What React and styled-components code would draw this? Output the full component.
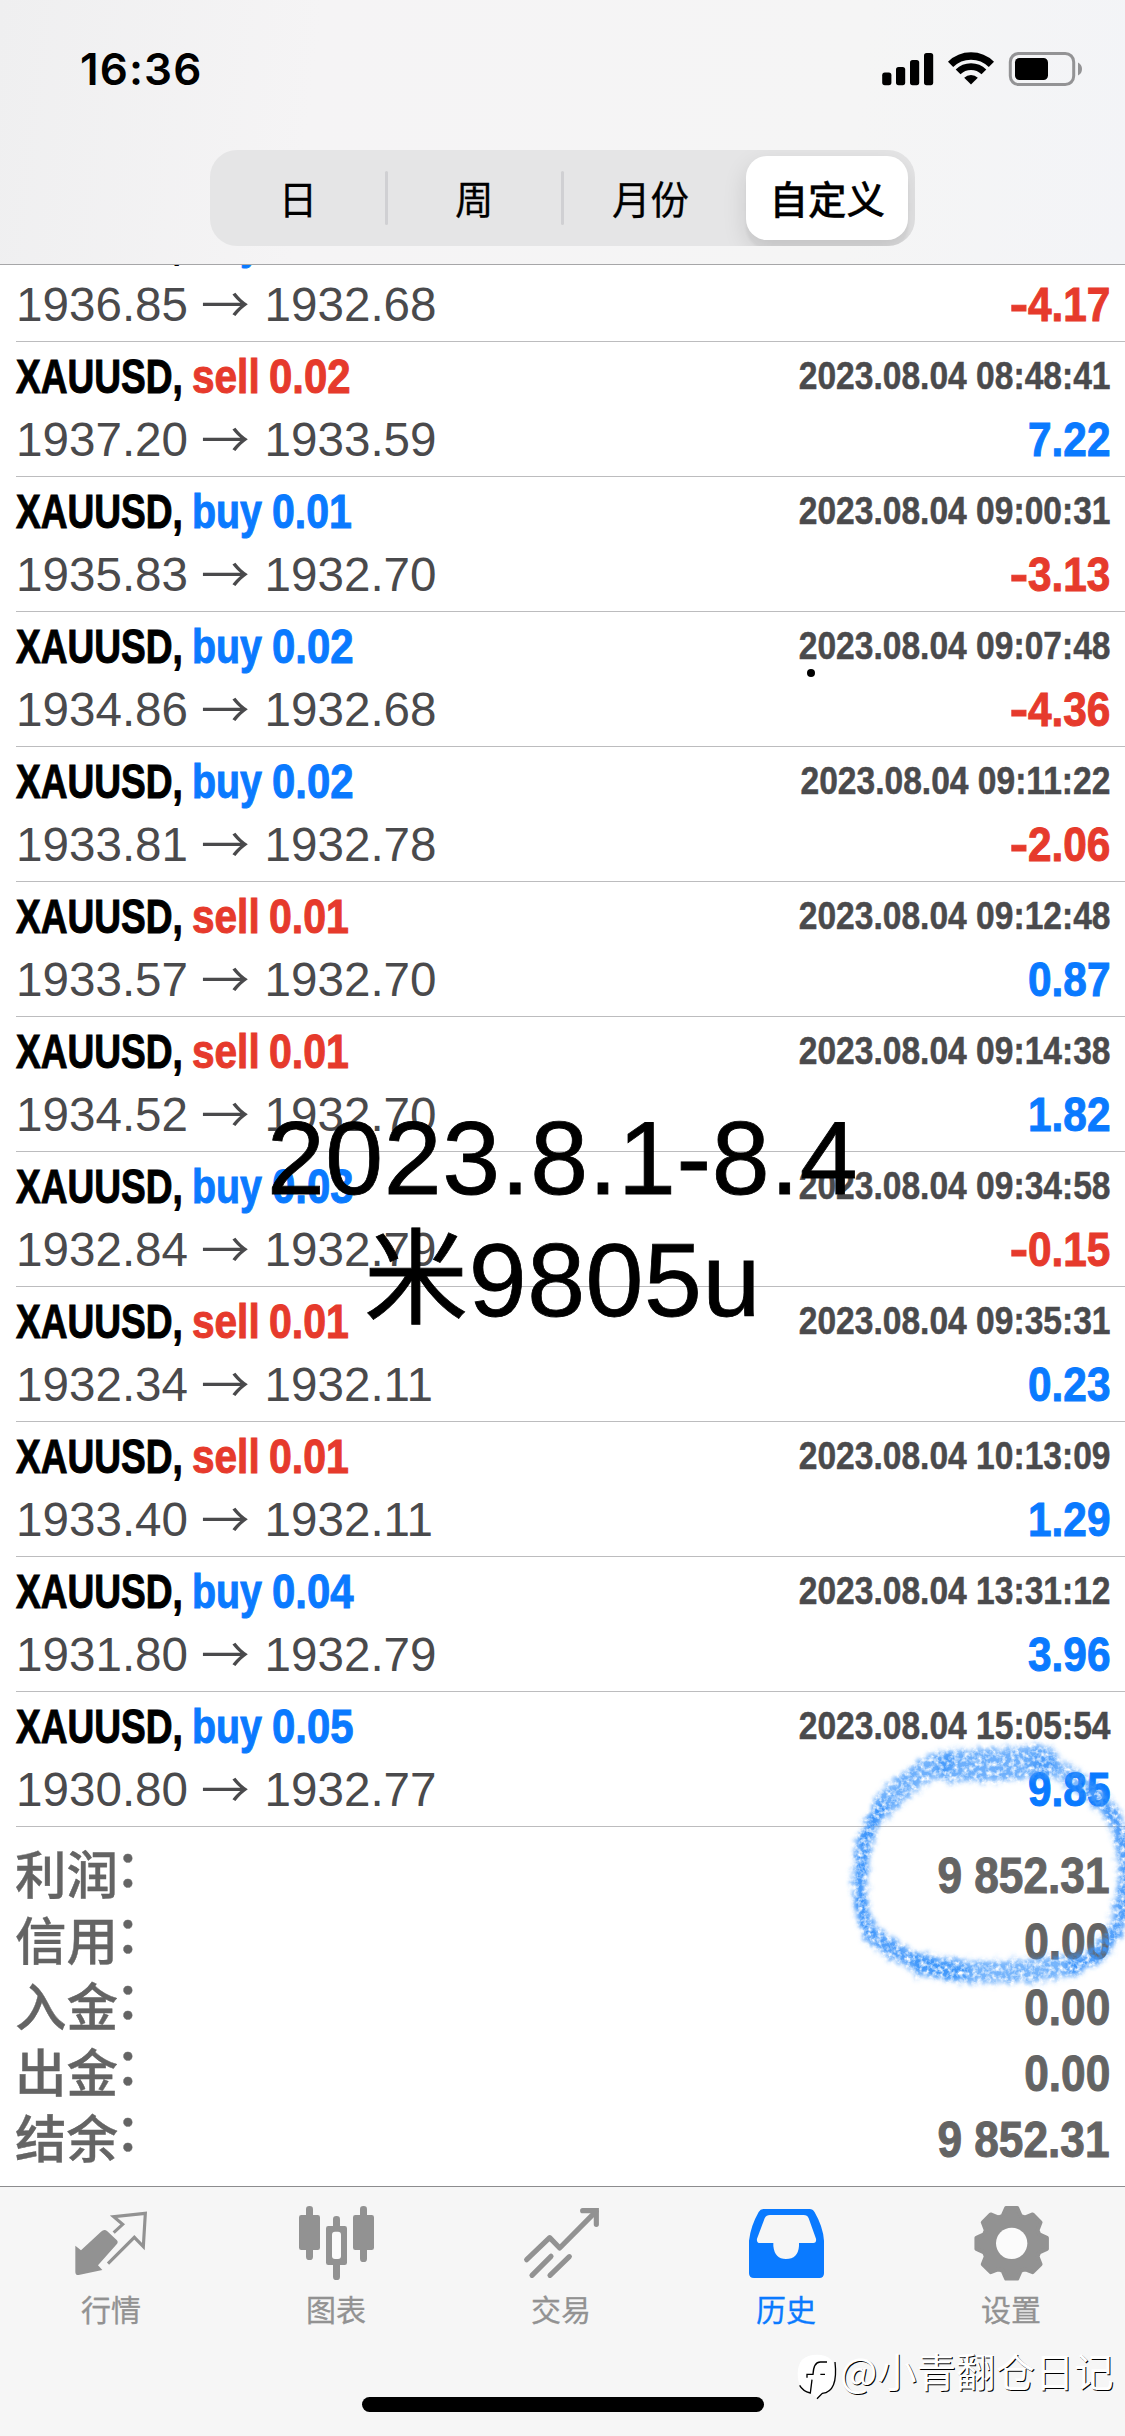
import React from "react";
import styled, { createGlobalStyle, css } from "styled-components";

const BLUE = "#0a7aff";
const RED = "#e63a2c";
const INK = "#4a4a4c";
const SANS = '"Liberation Sans", "Noto Sans CJK SC", sans-serif';
const CJK = '"Noto Sans CJK SC", "Liberation Sans", sans-serif';

const GlobalStyle = createGlobalStyle`
  * { box-sizing: border-box; }
  body { margin: 0; background: #fff; }
`;

const Screen = styled.div`
  position: relative;
  display: flex;
  flex-direction: column;
  width: 1125px;
  height: 2436px;
  overflow: hidden;
  background: #fff;
  font-family: ${SANS};
`;

/* ---------- header ---------- */

const Header = styled.header`
  flex: none;
  display: flex;
  flex-direction: column;
  height: 265px;
  border-bottom: 1px solid #a6a6a8;
  background: linear-gradient(97deg, #efeff0 0%, #f5f4f5 28%, #f5f5f5 75%, #f3f4f7 100%);
`;

const StatusBar = styled.div`
  display: flex;
  justify-content: space-between;
  height: 150px;
  padding: 51px 43px 0 80px;
`;

const Clock = styled.div`
  font: 600 44px/36px Inter, sans-serif;
  letter-spacing: 1.1px;
  color: #000;
`;

const StatusIcons = styled.svg`
  display: block;
  width: 200px;
  height: 36px;
`;

const Segmented = styled.div`
  display: flex;
  align-self: center;
  width: 705px;
  height: 96px;
  border-radius: 27px;
  background: #e5e5e6;
  overflow: hidden;
`;

const Segment = styled.div`
  flex: 1;
  display: flex;
  align-items: center;
  justify-content: center;
  padding-bottom: ${(p) => (p.$active ? 0 : 3)}px;
  font: 400 38.5px/54px ${CJK};
  color: #000;
  -webkit-text-stroke: 0.3px #000;
`;

const Divider = styled.i`
  align-self: center;
  width: 3px;
  height: 54px;
  margin: 0 -1.5px;
  border-radius: 2px;
  background: #d0d0d3;
`;

const ActivePill = styled.div`
  display: flex;
  align-items: center;
  justify-content: center;
  width: 162px;
  height: 84px;
  margin-left: 1px;
  padding-bottom: 3px;
  border-radius: 21px;
  background: #fff;
  font-weight: 500;
  box-shadow: 0 9px 24px rgba(0, 0, 0, 0.12), 0 9px 3px rgba(0, 0, 0, 0.04);
`;

/* ---------- deals ---------- */

const DealList = styled.main`
  flex: none;
  height: 1562px;
  overflow: hidden;
`;

const Deal = styled.section`
  height: 135px;
  margin-left: 16px;
  padding: 3px 15px 0 0;
  border-bottom: 1px solid #bcbcbe;
  &:first-child { margin-top: -58px; }
`;

const Line = styled.div`
  display: flex;
  height: 63px;
  line-height: 63px;
  font-size: 48px;
  white-space: nowrap;
`;

const Condensed = styled.span`
  display: block;
  flex: none;
  width: ${(p) => (p.$w ? `${p.$w}px` : "auto")};
  font-weight: 700;
  color: ${(p) => p.$color};
  transform: scaleX(${(p) => p.$k});
  transform-origin: ${(p) => (p.$right ? "right" : "left")} center;
  -webkit-text-stroke: 1px ${(p) => p.$color};
  ${(p) => p.$right && css`margin-left: auto;`}
`;

const Stamp = styled(Condensed)`
  font-size: 38.5px;
  line-height: 61px;
  -webkit-text-stroke-width: 0.5px;
`;

const Minus = styled.span`
  display: inline-block;
  transform: scaleX(1.3);
  transform-origin: right center;
`;

const Price = styled.span`
  width: 173px;
  font-size: 47.6px;
  color: ${INK};
`;

const Arrow = styled.span`
  width: 75.5px;
  padding-right: 3px;
  text-align: center;
  font: 400 48.5px/59px ${CJK};
  color: ${INK};
`;

/* ---------- summary ---------- */

const Summary = styled.section`
  flex: none;
  height: 359px;
  padding: 15.5px 15px 0 15px;
`;

const SummaryRow = styled.div`
  display: flex;
  height: 66px;
  line-height: 66px;
  font-size: 50.5px;
  white-space: nowrap;
`;

const Label = styled.span`
  font: 500 51.5px/58px ${CJK};
  color: #646464;
  -webkit-text-stroke: 0.4px #646464;
`;

const Colon = styled.span`
  display: inline-block;
  transform: translate(-3px, -7px);
`;

/* ---------- tab bar ---------- */

const TabBar = styled.nav`
  flex: none;
  display: flex;
  flex-direction: column;
  align-items: center;
  height: 250px;
  border-top: 1px solid #8c8c8e;
  background: #f6f6f6;
`;

const Tabs = styled.div`
  display: flex;
  width: 100%;
  height: 210px;
`;

const Tab = styled.div`
  flex: 1;
  display: flex;
  flex-direction: column;
  align-items: center;
  padding-top: 18px;
  color: ${(p) => (p.$active ? BLUE : "#929292")};
`;

const TabLabel = styled.span`
  padding-right: 3px;
  font: 400 30px/44px ${CJK};
  -webkit-text-stroke: 0.3px currentColor;
`;

const TabIcon = styled.svg`
  display: block;
  width: 75px;
  height: 75px;
  margin-bottom: 6px;
  overflow: visible;
  fill: currentColor;
`;

const HomeIndicator = styled.div`
  width: 402px;
  height: 15px;
  border-radius: 8px;
  background: #000;
`;

/* ---------- annotations laid over the screen ---------- */

const Note = styled.div`
  position: absolute;
  top: 1097px;
  left: 0;
  width: 1125px;
  text-align: center;
  font: 400 104px/122px ${SANS};
  letter-spacing: 0.6px;
  color: #000;
  -webkit-text-stroke: 0.8px #000;
`;

const NoteLine = styled.div`
  height: 122px;
  white-space: nowrap;
`;

const Dot = styled.i`
  position: absolute;
  top: 669px;
  left: 807px;
  width: 8px;
  height: 8px;
  border-radius: 50%;
  background: #000;
`;

const Scribble = styled.svg`
  position: absolute;
  top: 1700px;
  left: 820px;
  width: 305px;
  height: 320px;
  fill: none;
  stroke: #3d95fb;
  stroke-linecap: round;
  stroke-linejoin: round;
`;

const Watermark = styled.div`
  position: absolute;
  top: 2349px;
  left: 796px;
  display: flex;
  align-items: flex-start;
  font: 400 39.4px/42px ${CJK};
  color: #fff;
  text-shadow: 1px 1px 0 #000;
  white-space: nowrap;
`;

const WatermarkLogo = styled.svg`
  width: 42px;
  height: 48px;
  margin: 3px 2px 0 0;
`;

const DEALS = [
  ["buy", "0.01", "", "1936.85", "1932.68", "-4.17"],
  ["sell", "0.02", "2023.08.04 08:48:41", "1937.20", "1933.59", "7.22"],
  ["buy", "0.01", "2023.08.04 09:00:31", "1935.83", "1932.70", "-3.13"],
  ["buy", "0.02", "2023.08.04 09:07:48", "1934.86", "1932.68", "-4.36"],
  ["buy", "0.02", "2023.08.04 09:11:22", "1933.81", "1932.78", "-2.06"],
  ["sell", "0.01", "2023.08.04 09:12:48", "1933.57", "1932.70", "0.87"],
  ["sell", "0.01", "2023.08.04 09:14:38", "1934.52", "1932.70", "1.82"],
  ["buy", "0.03", "2023.08.04 09:34:58", "1932.84", "1932.79", "-0.15"],
  ["sell", "0.01", "2023.08.04 09:35:31", "1932.34", "1932.11", "0.23"],
  ["sell", "0.01", "2023.08.04 10:13:09", "1933.40", "1932.11", "1.29"],
  ["buy", "0.04", "2023.08.04 13:31:12", "1931.80", "1932.79", "3.96"],
  ["buy", "0.05", "2023.08.04 15:05:54", "1930.80", "1932.77", "9.85"],
];

const TOTALS = [
  ["利润", "9 852.31"],
  ["信用", "0.00"],
  ["入金", "0.00"],
  ["出金", "0.00"],
  ["结余", "9 852.31"],
];

function DealRow({ deal: [side, lots, time, open, close, profit] }) {
  const buy = side === "buy";
  const loss = profit[0] === "-";
  const tint = buy ? BLUE : RED;
  return (
    <Deal>
      <Line>
        <Condensed $w={buy ? 175.5 : 176} $k={0.772} $color="#000">XAUUSD,</Condensed>
        <Condensed $w={buy ? 80.5 : 77} $k={buy ? 0.82 : 0.845} $color={tint}>{side}</Condensed>
        <Condensed $k={lots.endsWith("1") ? 0.855 : 0.873} $color={tint}>{lots}</Condensed>
        {time && <Stamp $right $k={0.872} $color={INK}>{time}</Stamp>}
      </Line>
      <Line>
        <Price>{open}</Price>
        <Arrow>→</Arrow>
        <Price>{close}</Price>
        <Condensed $right $k={0.882} $color={loss ? RED : BLUE}>
          {loss && <Minus>-</Minus>}
          {loss ? profit.slice(1) : profit}
        </Condensed>
      </Line>
    </Deal>
  );
}

function gearPath(cx, cy) {
  const at = (deg, r) => {
    const a = ((deg - 90) * Math.PI) / 180;
    return `${(cx + r * Math.cos(a)).toFixed(1)} ${(cy + r * Math.sin(a)).toFixed(1)}`;
  };
  let d = "";
  for (let i = 0; i < 8; i++) {
    const t = i * 45;
    d += `${i ? "L" : "M"}${at(t - 18, 87)} L${at(t - 9, 107)} L${at(t + 9, 107)} L${at(t + 18, 87)} `;
  }
  return `${d}Z`;
}

const ICONS = {
  quotes: (
    <TabIcon viewBox="225 105 225 225">
      <path d="M226 227 L243 241 L303 185 Q313 175 322 184 L350 210 Q356 216 350 223 L294 286 L307 300 L236 315 Q226 316 226 305 Z" />
      <path d="M341 188 L368 163 L341 140 L436 130 L430 230 L403 202 L324 281" fill="none" stroke="currentColor" strokeWidth="9.5" />
    </TabIcon>
  ),
  chart: (
    <TabIcon viewBox="900 105 225 225">
      <rect x="897" y="135" width="63" height="105" rx="7" />
      <rect x="918" y="108" width="21" height="162" rx="10" />
      <rect x="1059" y="135" width="63" height="105" rx="7" />
      <rect x="1080" y="108" width="21" height="168" rx="10" />
      <rect x="999" y="138" width="21" height="192" rx="10" />
      <rect x="978" y="168" width="63" height="117" rx="7" />
      <rect x="996" y="185" width="27" height="82" rx="9" fill="#fbfbfb" />
    </TabIcon>
  ),
  trade: (
    <TabIcon viewBox="375 105 225 225">
      <g fill="none" stroke="currentColor" strokeWidth="15.5" strokeLinecap="round" strokeLinejoin="round">
        <path d="M380 269 L449 203 L479 234 L588 124" />
        <path d="M548 122 H589 V163" strokeLinejoin="miter" />
        <path d="M396 316 L453 259 M450 316 L508 260" />
      </g>
    </TabIcon>
  ),
  history: (
    <TabIcon viewBox="1050 105 225 225">
      <path
        fillRule="evenodd"
        d="M1090 117 H1229 Q1238 117 1244 127 Q1269 170 1272 212 V310 Q1272 324 1258 324 H1062 Q1047 324 1047 310 V212 Q1052 168 1076 126 Q1081 117 1090 117 Z M1110 135 Q1099 135 1094 145 L1071 206 Q1069 219 1080 219 H1120 V228 Q1124 267 1158 267 Q1194 267 1197 228 V219 H1240 Q1250 219 1248 206 L1226 145 Q1222 135 1211 135 Z"
      />
    </TabIcon>
  ),
  settings: (
    <TabIcon viewBox="645 105 225 225">
      <path d={gearPath(755, 220)} stroke="currentColor" strokeWidth="12" strokeLinejoin="round" />
      <circle cx="755" cy="220" r="47" fill="#fbfbfb" />
    </TabIcon>
  ),
};

const TABS = [
  ["quotes", "行情"],
  ["chart", "图表"],
  ["trade", "交易"],
  ["history", "历史"],
  ["settings", "设置"],
];

export default function App() {
  return (
    <Screen>
      <GlobalStyle />
      <Header>
        <StatusBar>
          <Clock>16:36</Clock>
          <StatusIcons viewBox="882 51 200 36">
            <rect x="882.2" y="72.6" width="9.2" height="12.6" rx="2.6" />
            <rect x="896" y="67" width="9.2" height="18.2" rx="2.6" />
            <rect x="910" y="60" width="9.2" height="25.2" rx="2.6" />
            <rect x="924" y="53" width="9.2" height="32.2" rx="2.6" />
            <g fill="none" stroke="#000">
              <path d="M950.6 64.4 A28.9 28.9 0 0 1 991.4 64.4" strokeWidth="7.4" />
              <path d="M958.1 71.9 A18.3 18.3 0 0 1 983.9 71.9" strokeWidth="6.8" />
            </g>
            <path d="M971 84.6 L964.2 77.8 A9.8 9.8 0 0 1 977.8 77.8 Z" />
            <rect x="1010.3" y="53.4" width="63.4" height="31.2" rx="8.5" fill="none" stroke="#939395" strokeWidth="3" />
            <rect x="1015" y="58" width="33" height="22" rx="4.5" />
            <path d="M1078 62.5 Q1082 64.5 1082 69 Q1082 73.5 1078 75.5 Z" fill="#939395" />
          </StatusIcons>
        </StatusBar>
        <Segmented>
          <Segment>日</Segment>
          <Divider />
          <Segment>周</Segment>
          <Divider />
          <Segment>月份</Segment>
          <Segment $active><ActivePill>自定义</ActivePill></Segment>
        </Segmented>
      </Header>

      <DealList>
        {DEALS.map((deal, i) => <DealRow key={i} deal={deal} />)}
      </DealList>

      <Summary>
        {TOTALS.map(([label, value]) => (
          <SummaryRow key={label}>
            <Label>{label}<Colon>：</Colon></Label>
            <Condensed $right $k={0.876} $color="#646464">{value}</Condensed>
          </SummaryRow>
        ))}
      </Summary>

      <TabBar>
        <Tabs>
          {TABS.map(([icon, label]) => (
            <Tab key={icon} $active={icon === "history"}>
              {ICONS[icon]}
              <TabLabel>{label}</TabLabel>
            </Tab>
          ))}
        </Tabs>
        <HomeIndicator />
      </TabBar>

      <Dot />
      <Note>
        <NoteLine>2023.8.1-8.4</NoteLine>
        <NoteLine>米9805u</NoteLine>
      </Note>

      <Scribble viewBox="0 0 915 960">
        <defs>
          <filter id="crayon" filterUnits="userSpaceOnUse" x="0" y="0" width="1000" height="960">
            <feTurbulence type="fractalNoise" baseFrequency="0.07" numOctaves="3" seed="4" result="grain" />
            <feDisplacementMap in="SourceGraphic" in2="grain" scale="50" xChannelSelector="R" yChannelSelector="G" result="rough" />
            <feGaussianBlur in="rough" stdDeviation="6" result="soft" />
            <feColorMatrix in="grain" type="matrix" values="0 0 0 0 0  0 0 0 0 0  0 0 0 0 0  0 0 2.2 0 -0.32" result="mask" />
            <feComposite in="soft" in2="mask" operator="in" />
          </filter>
        </defs>
        <g filter="url(#crayon)">
          <path d="M400 198 Q540 195 665 185" strokeWidth="98" opacity="0.75" />
          <path d="M370 185 Q260 235 190 320" strokeWidth="68" opacity="0.75" />
          <path d="M180 330 Q118 410 121 560 Q120 640 150 695" strokeWidth="40" />
          <path d="M150 695 Q260 800 420 815" strokeWidth="50" opacity="0.9" />
          <path d="M300 795 Q520 835 760 795" strokeWidth="68" opacity="0.7" />
          <path d="M760 800 Q870 765 905 640 Q930 500 905 420 Q880 330 820 280" strokeWidth="46" opacity="0.9" />
          <path d="M830 290 Q760 220 660 190" strokeWidth="60" opacity="0.65" />
        </g>
      </Scribble>

      <Watermark>
        <WatermarkLogo viewBox="105 545 126 144">
          <path d="M168 685 L178 668 Q224 664 224 612 Q224 553 168 553 Q110 553 110 610 Q110 658 150 668 Z" fill="#fff" />
          <path d="M222 575 Q232 664 184 669 L168 685 M116 645 Q125 662 148 668 L153 628 M138 622 V612 H156 Q158 575 178 575 H198 M178 612 H192" fill="none" stroke="#000" strokeWidth="4" />
        </WatermarkLogo>
        @小青翻仓日记
      </Watermark>
    </Screen>
  );
}
